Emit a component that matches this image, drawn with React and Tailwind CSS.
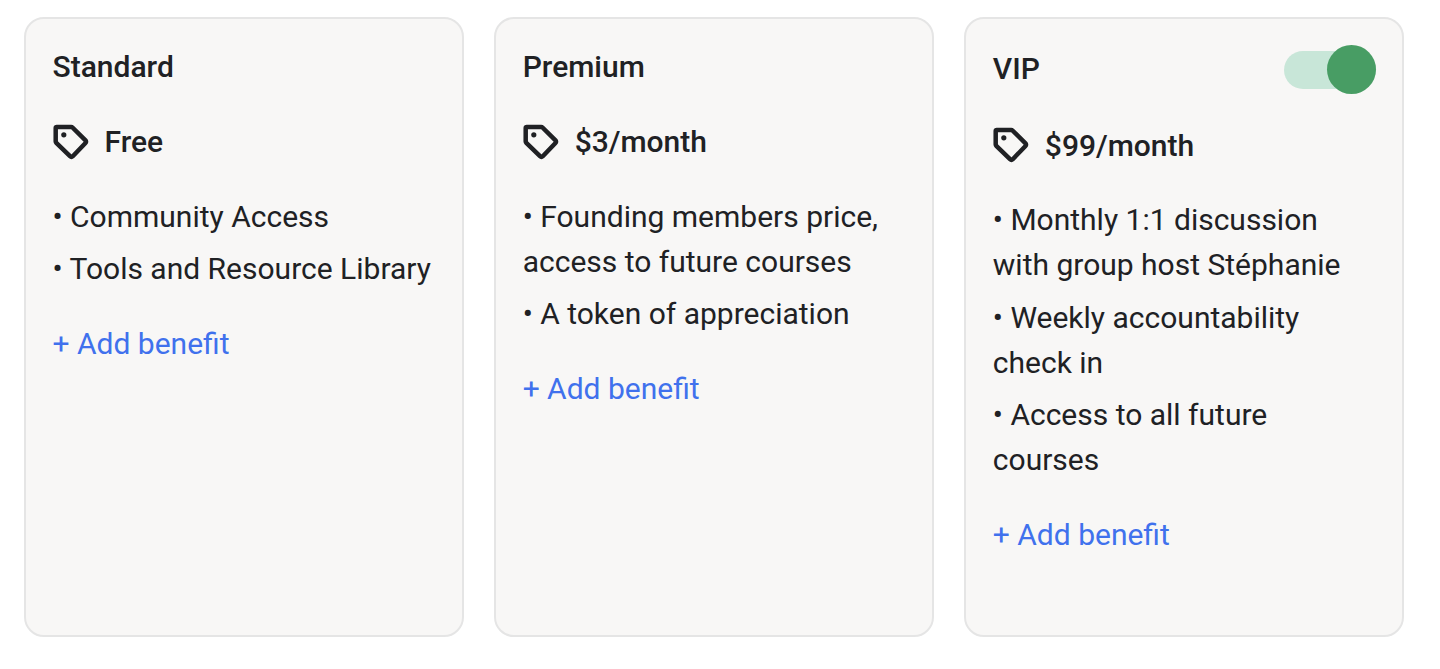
const TIERS = [
  {
    id: 'standard',
    name: 'Standard',
    price: 'Free',
    benefits: ['Community Access', 'Tools and Resource Library'],
  },
  {
    id: 'premium',
    name: 'Premium',
    price: '$3/month',
    benefits: ['Founding members price, access to future courses', 'A token of appreciation'],
  },
  {
    id: 'vip',
    name: 'VIP',
    price: '$99/month',
    hasToggle: true,
    benefits: [
      'Monthly 1:1 discussion with group host Stéphanie',
      'Weekly accountability check in',
      'Access to all future courses',
    ],
  },
];

function TagIcon() {
  return (
    <svg viewBox="0 0 36 36" className="h-9 w-9 shrink-0" fill="none">
      <path
        d="M2.7 3.9a1 1 0 0 1 1-1h14.4a2 2 0 0 1 1.4.6l13 12.8a1.9 1.9 0 0 1 0 2.7L19.8 32.2a2 2 0 0 1-2.8 0L3.3 18.8a2 2 0 0 1-.6-1.4z"
        stroke="#202124"
        strokeWidth="4.5"
        strokeLinejoin="round"
      />
      <circle cx="10.8" cy="10.8" r="2.6" fill="#202124" />
    </svg>
  );
}

function Toggle() {
  return (
    <div className="mt-px flex h-[49px] w-[92px] items-center">
      <div className="flex h-[38px] w-full items-center justify-end rounded-full bg-[#c8e6d8]">
        <div className="h-[49px] w-[49px] shrink-0 rounded-full bg-[#489d64]" />
      </div>
    </div>
  );
}

function TierCard({ tier }) {
  return (
    <div className="rounded-[20px] border-2 border-[#e5e5e5] bg-[#f8f7f6] px-[26.5px] pt-[25px]">
      <div className={`flex justify-between ${tier.hasToggle ? 'h-[48.5px]' : 'h-[45px]'}`}>
        <h2 className={`font-medium ${tier.hasToggle ? 'pt-[2px]' : ''}`}>{tier.name}</h2>
        {tier.hasToggle && <Toggle />}
      </div>
      <div className="mt-[30px] flex items-center gap-4 font-medium">
        <TagIcon />
        <span>{tier.price}</span>
      </div>
      <ul className="mt-[29.5px] flex flex-col gap-[7.5px]">
        {tier.benefits.map((benefit) => (
          <li key={benefit}>{`• ${benefit}`}</li>
        ))}
      </ul>
      <button className="mt-[30px] block text-[#4071ed]">+ Add benefit</button>
    </div>
  );
}

export default function App() {
  return (
    <div className="h-[669px] bg-white pl-6 pr-[35.5px] pt-[17px] font-['Roboto',sans-serif] text-[30px] leading-[45px] text-[#202124]">
      <div className="grid h-[620px] grid-cols-3 gap-[30px]">
        {TIERS.map((tier) => (
          <TierCard key={tier.id} tier={tier} />
        ))}
      </div>
    </div>
  );
}
